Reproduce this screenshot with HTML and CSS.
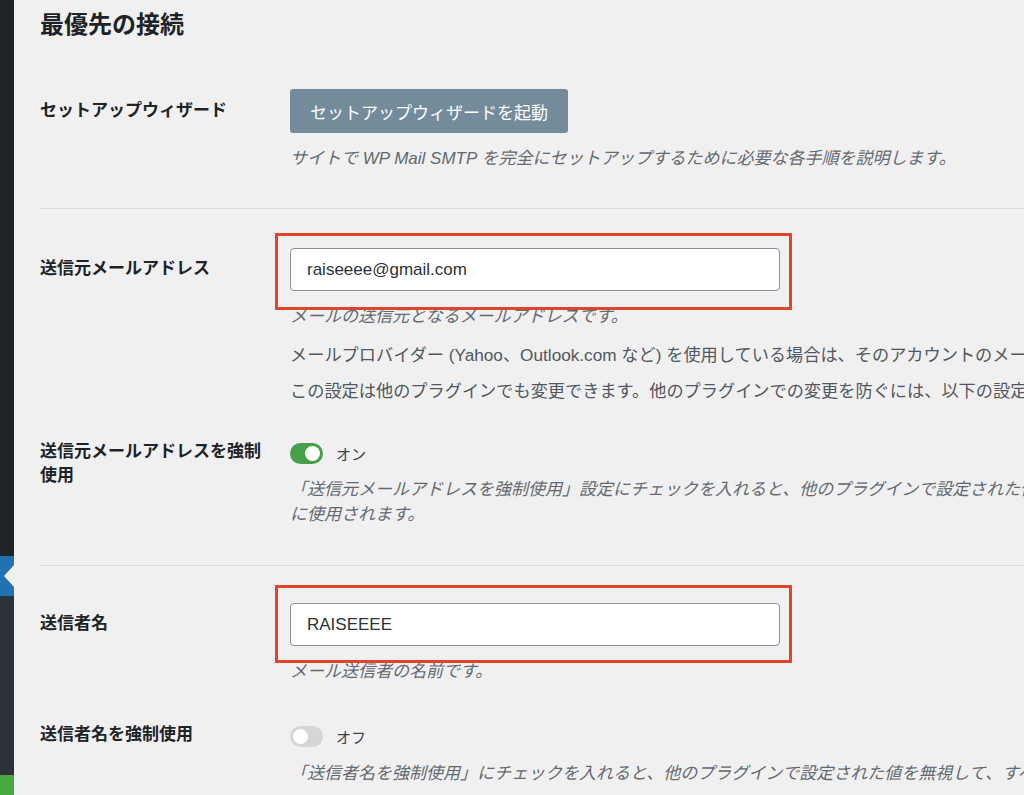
FILE: index.html
```html
<!DOCTYPE html>
<html lang="ja">
<head>
<meta charset="UTF-8" />
<meta name="viewport" content="width=device-width, initial-scale=1" />
<title>WP Mail SMTP 設定</title>
<link rel="stylesheet" href="styles.css">
</head>
<body>

<div class="admin">
  <div class="sidebar">
    <div class="side-top"></div>
    <div class="side-current"><span class="side-arrow"></span></div>
    <div class="side-rest"></div>
    <div class="side-green"></div>
  </div>

  <div class="main">
    <h2 class="section-title">最優先の接続</h2>

    <div class="row row-wizard">
      <div class="row-label">セットアップウィザード</div>
      <div class="row-field">
        <button class="btn-wizard">セットアップウィザードを起動</button>
        <p class="desc desc-first">サイトで WP Mail SMTP を完全にセットアップするために必要な各手順を説明します。</p>
      </div>
    </div>

    <div class="row row-from">
      <div class="row-label">送信元メールアドレス</div>
      <div class="row-field">
        <div class="input-wrap mark-from">
          <input class="text-input" type="email" value="raiseeee@gmail.com">
        </div>
        <p class="desc desc-first">メールの送信元となるメールアドレスです。</p>
        <p class="note">メールプロバイダー (Yahoo、Outlook.com など) を使用している場合は、そのアカウントのメールアドレスを使用してください。</p>
        <p class="note">この設定は他のプラグインでも変更できます。他のプラグインでの変更を防ぐには、以下の設定を有効にしてください。</p>
      </div>
    </div>

    <div class="row row-force-from">
      <div class="row-label">送信元メールアドレスを強制使用</div>
      <div class="row-field">
        <label class="toggle-line">
          <span class="toggle on"><span class="knob"></span></span>
          <span class="toggle-text">オン</span>
        </label>
        <p class="desc desc-wrap">「送信元メールアドレスを強制使用」設定にチェックを入れると、他のプラグインで設定された値を無視して、上記の送信元メールアドレスが常<br>に使用されます。</p>
      </div>
    </div>

    <div class="row row-name">
      <div class="row-label">送信者名</div>
      <div class="row-field">
        <div class="input-wrap mark-name">
          <input class="text-input" type="text" value="RAISEEEE">
        </div>
        <p class="desc desc-first">メール送信者の名前です。</p>
      </div>
    </div>

    <div class="row row-force-name">
      <div class="row-label">送信者名を強制使用</div>
      <div class="row-field">
        <label class="toggle-line">
          <span class="toggle"><span class="knob"></span></span>
          <span class="toggle-text">オフ</span>
        </label>
        <p class="desc desc-first">「送信者名を強制使用」にチェックを入れると、他のプラグインで設定された値を無視して、すべてのメールに上記の送信者名が使用されます。</p>
      </div>
    </div>
  </div>
</div>

</body>
</html>
```

FILE: styles.css
```css
html, body {
  margin: 0;
  height: 795px;
  overflow: hidden;
}
body {
  font-family: "Liberation Sans", "Noto Sans CJK JP", sans-serif;
  background: #f0f0f1;
  color: #1d2327;
}
.admin {
  display: flex;
  height: 795px;
}

/* sidebar */
.sidebar {
  width: 14px;
  flex: 0 0 14px;
  display: flex;
  flex-direction: column;
}
.side-top {
  height: 556px;
  background: #1d2327;
}
.side-current {
  height: 40px;
  background: #2271b1;
  display: flex;
  align-items: center;
  justify-content: flex-end;
}
.side-arrow {
  width: 0;
  height: 0;
  border-top: 11px solid transparent;
  border-bottom: 11px solid transparent;
  border-right: 10px solid #f0f0f1;
}
.side-rest {
  flex: 1;
  background: #2c3338;
}
.side-green {
  height: 20px;
  background: #45a940;
}

/* main */
.main {
  flex: 1;
  min-width: 0;
  padding-left: 26px;
  overflow: hidden;
}
.section-title {
  margin: 10px 0 0;
  font-size: 24px;
  line-height: 30px;
  font-weight: 700;
  color: #1d2327;
}
.row {
  display: grid;
  grid-template-columns: 235px 1fr;
  column-gap: 15px;
}
.row-label {
  font-size: 17px;
  font-weight: 700;
  line-height: 24px;
  color: #1d2327;
}
.row-field {
  min-width: 0;
}

.row-wizard {
  padding: 49px 0 37px;
  border-bottom: 1px solid #dcdcde;
}
.row-wizard .row-label { padding-top: 10px; }

.row-from { padding-top: 39px; }
.row-from .row-label { padding-top: 9px; }

.row-force-from {
  padding: 37px 0 38px;
  border-bottom: 1px solid #dcdcde;
}
.row-force-from .row-field { padding-top: 1px; }

.row-name { padding-top: 37px; }
.row-name .row-label { padding-top: 9px; }

.row-force-name { padding-top: 39px; }
.row-force-name .row-field { padding-top: 1px; }

.btn-wizard {
  height: 44px;
  padding: 0 20px;
  border: none;
  border-radius: 3px;
  background: #748b9c;
  color: #fff;
  font-family: inherit;
  font-size: 17px;
}

.desc {
  margin: 12px 0 0;
  font-size: 17px;
  line-height: 24px;
  font-style: italic;
  color: #646970;
  white-space: nowrap;
}
.desc-first { margin-top: 14px; }
.desc-wrap {
  margin-top: 12px;
  line-height: 25px;
}
.note {
  margin: 14px 0 0;
  font-size: 17.2px;
  line-height: 24px;
  color: #50575e;
  white-space: nowrap;
}
.note + .note { margin-top: 12px; }

/* text inputs with the red annotation frame */
.input-wrap {
  position: relative;
  width: 490px;
}
.input-wrap::after {
  content: "";
  position: absolute;
  left: -15px;
  right: -12px;
  border: 3px solid #e0452b;
  pointer-events: none;
}
.mark-from::after {
  top: -15px;
  bottom: -19px;
}
.mark-name::after {
  top: -18px;
  bottom: -17px;
}
.text-input {
  display: block;
  box-sizing: border-box;
  width: 100%;
  height: 43px;
  padding: 0 16px;
  border: 1px solid #8c8f94;
  border-radius: 4px;
  background: #fff;
  font-family: inherit;
  font-size: 17px;
  color: #2c3338;
}

/* toggles */
.toggle-line {
  display: flex;
  align-items: center;
  gap: 13px;
  height: 24px;
}
.toggle {
  width: 33px;
  height: 21px;
  box-sizing: border-box;
  border-radius: 11px;
  background: #d6d6d6;
  padding: 3px;
  display: flex;
}
.toggle .knob {
  width: 15px;
  height: 15px;
  border-radius: 50%;
  background: #fff;
}
.toggle.on {
  background: #46a049;
  justify-content: flex-end;
}
.toggle-text {
  font-size: 15px;
  color: #3c434a;
}
```
